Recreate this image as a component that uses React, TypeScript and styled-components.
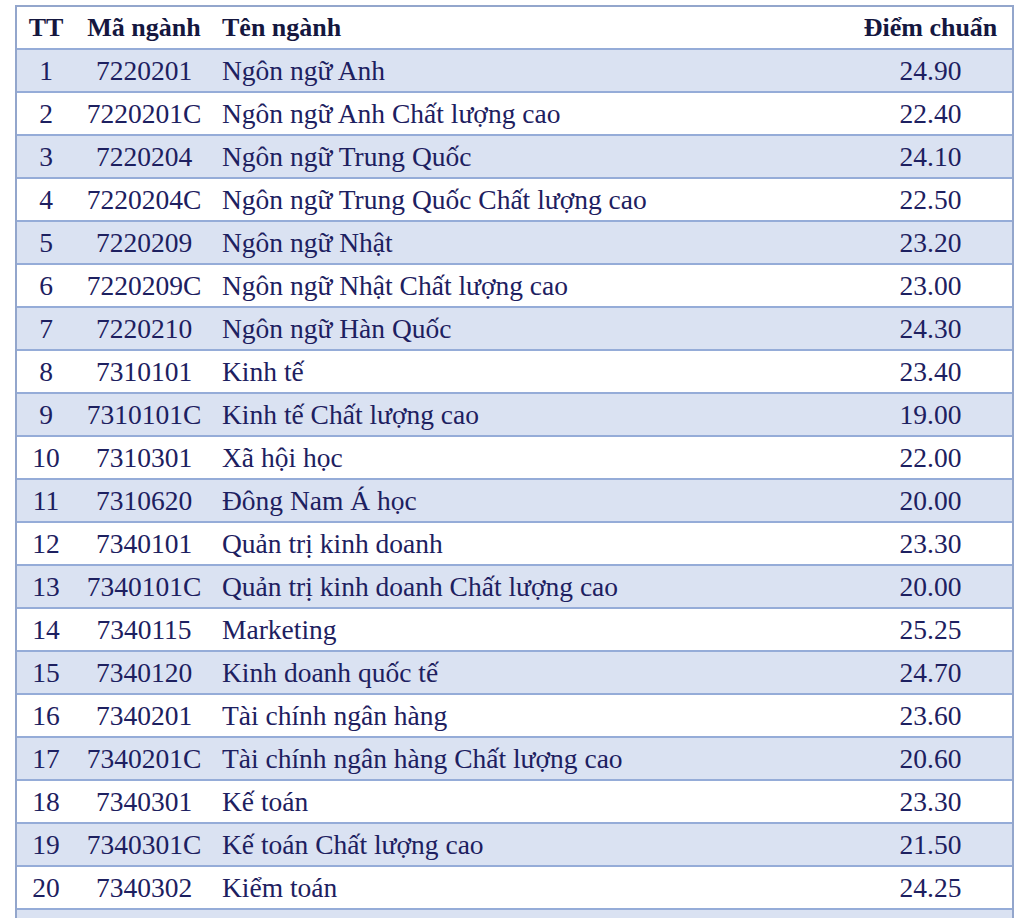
import React from "react";
import styled, { createGlobalStyle } from "styled-components";

const Global = createGlobalStyle`
  html, body { margin: 0; padding: 0; background: #ffffff; }
  body { font-family: "Liberation Serif", "Times New Roman", serif; }
`;

const Page = styled.div`
  padding: 5px 6px 0 15px;
  height: 918px;
  overflow: hidden;
  box-sizing: border-box;
`;

const Table = styled.div`
  width: 999px;
  border-left: 2px solid #93a6cc;
  border-right: 2px solid #93a6cc;
  border-top: 2px solid #93a6cc;
  box-sizing: border-box;
`;

const Row = styled.div<{ $striped?: boolean; $header?: boolean }>`
  display: grid;
  grid-template-columns: 58px 138px 636px 1fr;
  height: 43px;
  box-sizing: border-box;
  border-bottom: 2px solid #95acd8;
  background: ${(p) => (p.$striped ? "#dae2f2" : "#ffffff")};
  color: ${(p) => (p.$header ? "#15173f" : "#1d2060")};
  font-size: ${(p) => (p.$header ? "26px" : "27.5px")};
  font-weight: ${(p) => (p.$header ? 700 : 400)};
`;

const Cell = styled.div<{ $align?: "left" | "center" }>`
  display: flex;
  align-items: center;
  justify-content: ${(p) => (p.$align === "left" ? "flex-start" : "center")};
  padding-left: ${(p) => (p.$align === "left" ? "9px" : "0")};
  white-space: nowrap;
  line-height: 1;
`;

const rows: [string, string, string, string][] = [
  ["1", "7220201", "Ngôn ngữ Anh", "24.90"],
  ["2", "7220201C", "Ngôn ngữ Anh Chất lượng cao", "22.40"],
  ["3", "7220204", "Ngôn ngữ Trung Quốc", "24.10"],
  ["4", "7220204C", "Ngôn ngữ Trung Quốc Chất lượng cao", "22.50"],
  ["5", "7220209", "Ngôn ngữ Nhật", "23.20"],
  ["6", "7220209C", "Ngôn ngữ Nhật Chất lượng cao", "23.00"],
  ["7", "7220210", "Ngôn ngữ Hàn Quốc", "24.30"],
  ["8", "7310101", "Kinh tế", "23.40"],
  ["9", "7310101C", "Kinh tế Chất lượng cao", "19.00"],
  ["10", "7310301", "Xã hội học", "22.00"],
  ["11", "7310620", "Đông Nam Á học", "20.00"],
  ["12", "7340101", "Quản trị kinh doanh", "23.30"],
  ["13", "7340101C", "Quản trị kinh doanh Chất lượng cao", "20.00"],
  ["14", "7340115", "Marketing", "25.25"],
  ["15", "7340120", "Kinh doanh quốc tế", "24.70"],
  ["16", "7340201", "Tài chính ngân hàng", "23.60"],
  ["17", "7340201C", "Tài chính ngân hàng Chất lượng cao", "20.60"],
  ["18", "7340301", "Kế toán", "23.30"],
  ["19", "7340301C", "Kế toán Chất lượng cao", "21.50"],
  ["20", "7340302", "Kiểm toán", "24.25"],
];

export default function App() {
  return (
    <Page>
      <Global />
      <Table>
        <Row $header>
          <Cell>TT</Cell>
          <Cell>Mã ngành</Cell>
          <Cell $align="left">Tên ngành</Cell>
          <Cell>Điểm chuẩn</Cell>
        </Row>
        {rows.map((r, i) => (
          <Row key={r[0]} $striped={i % 2 === 0}>
            <Cell>{r[0]}</Cell>
            <Cell>{r[1]}</Cell>
            <Cell $align="left">{r[2]}</Cell>
            <Cell>{r[3]}</Cell>
          </Row>
        ))}
        <Row $striped>
          <Cell />
          <Cell />
          <Cell $align="left" />
          <Cell />
        </Row>
      </Table>
    </Page>
  );
}
